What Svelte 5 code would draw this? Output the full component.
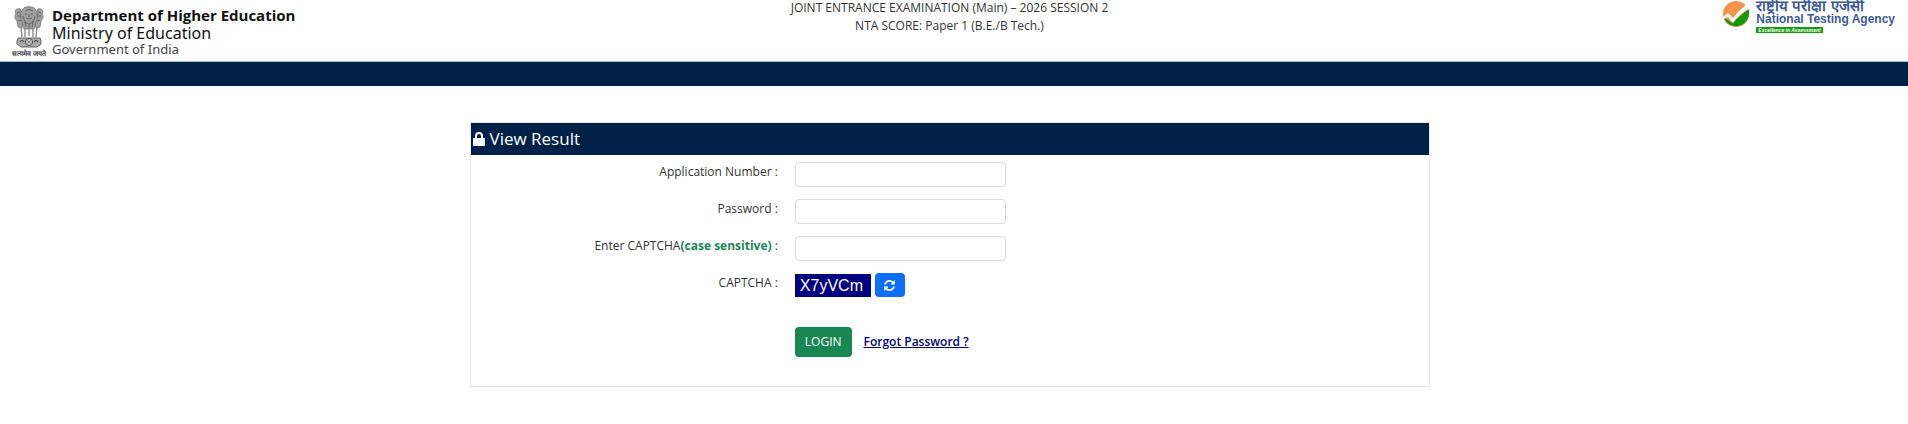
<script lang="ts">
  const motto = 'सत्यमेव जयते';
  const captchaChars = 'ABCDEFGHJKLMNPQRSTUVWXYZabcdefghjkmnpqrstuvwxyz23456789';

  let applicationNumber = $state('');
  let password = $state('');
  let captchaInput = $state('');
  let captcha = $state('X7yVCm');

  const refreshCaptcha = () => {
    captcha = Array.from({ length: 6 }, () => captchaChars[Math.floor(Math.random() * captchaChars.length)]).join('');
    captchaInput = '';
  };

  const login = (event: SubmitEvent) => {
    event.preventDefault();
    if (captchaInput !== captcha) {
      refreshCaptcha();
    }
  };
</script>

<header class="header">
  <div class="ministry">
    <svg class="emblem" viewBox="0 0 34 52" role="img" aria-label="Emblem of India">
      <!-- lions -->
      <g fill="#a0a0a0" stroke="#666" stroke-width="0.7">
        <path d="M8 3 C4 2 2 5 4 8 C2 10 3 13 5 15 L6 21 L10 22 L12 10 Z" />
        <path d="M26 3 C30 2 32 5 30 8 C32 10 31 13 29 15 L28 21 L24 22 L22 10 Z" />
        <path d="M11 3 C12 0 22 0 23 3 C26 6 26 12 24 16 L22 23 H12 L10 16 C8 12 8 6 11 3 Z" />
      </g>
      <g fill="none" stroke="#555" stroke-width="0.8">
        <path d="M13 5 Q17 2 21 5 M13 8 L15 8 M19 8 L21 8 M17 8 V11 M14 12 Q17 14 20 12 M11 10 Q12 17 17 18 Q22 17 23 10 M13 15 L14 21 M21 15 L20 21 M17 18 V22" />
        <path d="M5 7 L8 6 M5 10 L9 10 M6 14 L9 15 M29 7 L26 6 M29 10 L25 10 M28 14 L25 15" />
      </g>
      <g fill="none" stroke="#888" stroke-width="1.4">
        <path d="M9 21 L10 31 M13 22 L13 31 M21 22 L21 31 M25 21 L24 31 M17 22 V30" />
      </g>
      <!-- abacus with the wheel -->
      <path d="M6 32 H28 L29 35 V38 L25 41 H9 L5 38 V35 Z" fill="#aaa" stroke="#666" />
      <circle cx="17" cy="36" r="3.5" fill="#eee" stroke="#444" />
      <path d="M17 33 V39 M14 36 H20 M15 34 L19 38 M19 34 L15 38" stroke="#555" stroke-width="0.5" />
      <path d="M8 36 Q10 33 12 36 M22 36 Q24 33 26 36" fill="none" stroke="#444" stroke-width="1.2" />
      <text x="17" y="50" text-anchor="middle" font-size="7" font-weight="700" fill="#444">{motto}</text>
    </svg>
    <div class="ministry-name">
      <strong>Department of Higher Education</strong>
      <span>Ministry of Education</span>
      <small>Government of India</small>
    </div>
  </div>

  <div class="exam">
    <div>JOINT ENTRANCE EXAMINATION (Main) – 2026 SESSION 2</div>
    <div>NTA SCORE: Paper 1 (B.E./B Tech.)</div>
  </div>

  <div class="agency">
    <svg class="agency-mark" viewBox="0 0 26 26" aria-hidden="true">
      <circle cx="13" cy="13" r="13" fill="#f7924a" />
      <path d="M0.500 16 L9 22 L25.500 8 A13 13 0 0 1 0.500 16 Z" fill="#129b0e" />
      <path d="M0 16 L5 12 L10 17 Q16 9 23 4 L25.500 8 Q16 13 10 22 L5 16 L0.500 18 Z" fill="#fff" />
    </svg>
    <div class="agency-name">
      <span class="agency-hindi">राष्ट्रीय परीक्षा एजेंसी</span>
      <strong>National Testing Agency</strong>
      <em>Excellence in Assessment</em>
    </div>
  </div>
</header>

<div class="bar"></div>

<main>
  <section class="panel">
    <h1>
      <svg class="lock" viewBox="0 0 12 14" aria-hidden="true">
        <path d="M1 6 H11 Q12 6 12 7 V13 Q12 14 11 14 H1 Q0 14 0 13 V7 Q0 6 1 6 Z" fill="#fff" />
        <path d="M3 7 V4 A3 3 0 0 1 9 4 V7" fill="none" stroke="#fff" stroke-width="2" />
      </svg>
      View Result
    </h1>

    <form onsubmit={login}>
      <div class="row">
        <label for="application-number">Application Number :</label>
        <div class="control">
          <input id="application-number" type="text" bind:value={applicationNumber} />
        </div>
      </div>
      <div class="row">
        <label for="password">Password :</label>
        <div class="control">
          <input id="password" type="password" bind:value={password} />
        </div>
      </div>
      <div class="row">
        <label for="captcha-input">Enter CAPTCHA<b>(case sensitive)</b> :</label>
        <div class="control">
          <input id="captcha-input" type="text" autocomplete="off" bind:value={captchaInput} />
        </div>
      </div>
      <div class="row">
        <span class="label">CAPTCHA :</span>
        <div class="control">
          <span class="captcha">{captcha}</span>
          <button class="refresh" type="button" aria-label="Refresh CAPTCHA" onclick={refreshCaptcha}>
            <svg viewBox="0 0 1536 1536" aria-hidden="true">
              <path
                fill="#fff"
                d="M1511 928q0 5-1 7-64 268-268 434.500T764 1536q-146 0-282.500-55T238 1324l-129 129q-19 19-45 19t-45-19-19-45V960q0-26 19-45t45-19h448q26 0 45 19t19 45-19 45l-137 137q71 66 161 102t187 36q134 0 250-65t186-179q11-17 53-117 8-23 30-23h192q13 0 22.500 9.500t9.500 22.500zm25-800v448q0 26-19 45t-45 19h-448q-26 0-45-19t-19-45 19-45l138-138Q969 256 768 256q-134 0-250 65T332 500q-11 17-53 117-8 23-30 23H50q-13 0-22.500-9.500T18 608v-7q65-268 270-434.500T768 0q146 0 284 55.500T1297 212l130-129q19-19 45-19t45 19 19 45z"
              />
            </svg>
          </button>
        </div>
      </div>
      <div class="row actions">
        <div class="control">
          <button class="login" type="submit">LOGIN</button>
          <a href="#forgot-password">Forgot Password ?</a>
        </div>
      </div>
    </form>
  </section>
</main>

<style>
  :global(body) {
    background: #fff;
    color: #333;
    font: 12px/18px "Open Sans", sans-serif;
  }

  .header {
    display: grid;
    grid-template-columns: 1fr auto 1fr;
    height: 61px;
    padding: 0 9px 0 0;
    border-bottom: 1px solid #a9bcc8;
  }

  .ministry {
    display: flex;
    align-items: flex-start;
    gap: 6px;
    padding: 6px 0 0 12px;
  }

  .emblem {
    width: 34px;
    height: 52px;
  }

  .ministry-name {
    display: flex;
    flex-direction: column;
    font-family: "Noto Sans", sans-serif;
    color: #111;
  }

  .ministry-name strong {
    font-family: "Open Sans", sans-serif;
    font-size: 15px;
    line-height: 19px;
  }

  .ministry-name span {
    font-size: 16px;
    line-height: 17px;
  }

  .ministry-name small {
    font-size: 13px;
    line-height: 15px;
    color: #444;
  }

  .exam {
    margin-top: -1px;
    text-align: center;
  }

  .agency {
    display: flex;
    justify-content: flex-end;
    align-items: flex-start;
    gap: 7px;
    padding-right: 4px;
  }

  .agency-mark {
    width: 26px;
    height: 26px;
    margin-top: 1px;
  }

  .agency-name {
    display: flex;
    flex-direction: column;
    align-items: flex-start;
    font-family: "Liberation Sans", sans-serif;
    color: #3d5a98;
  }

  .agency-hindi {
    font-size: 15px;
    font-weight: 700;
    line-height: 12px;
  }

  .agency-name strong {
    font-size: 12px;
    line-height: 15px;
  }

  .agency-name em {
    padding: 0 2px;
    background: #129b0e;
    color: #fff;
    font-size: 5px;
    font-weight: 700;
    line-height: 6px;
  }

  .bar {
    height: 24px;
    background: #002147;
  }

  main {
    padding: 36px 9px 36px 0;
  }

  .panel {
    box-sizing: border-box;
    max-width: 960px;
    margin: 0 auto;
    border: 1px solid #e4e6ea;
  }

  h1 {
    display: flex;
    align-items: center;
    gap: 5px;
    margin: 0;
    padding: 0 2px;
    background: #002147;
    color: #fff;
    font-size: 17px;
    font-weight: 400;
    line-height: 32px;
  }

  .lock {
    width: 12px;
    height: 14px;
  }

  form {
    padding: 7px 0 29px;
  }

  .row {
    display: grid;
    grid-template-columns: 1fr 2fr;
    margin-bottom: 12px;
  }

  label,
  .label {
    padding-right: 12px;
    line-height: 20px;
    text-align: right;
  }

  label b {
    color: #198754;
  }

  .control {
    display: flex;
    align-items: center;
    gap: 4px;
    padding-left: 5px;
  }

  input {
    box-sizing: border-box;
    width: 211px;
    height: 25px;
    padding: 2px 8px;
    border: 1px solid #d5dae0;
    border-radius: 4px;
    font: inherit;
  }

  .captcha {
    padding: 0 8px 0 5px;
    background: #000080;
    color: #fff;
    font: 16px/23px "Liberation Sans", sans-serif;
  }

  button {
    border: 0;
    border-radius: 4px;
    color: #fff;
    font: inherit;
    cursor: pointer;
  }

  .refresh {
    display: flex;
    align-items: center;
    justify-content: center;
    width: 30px;
    height: 24px;
    padding: 0;
    background: #0d6efd;
  }

  .refresh svg {
    width: 11px;
    height: 11px;
  }

  .actions {
    margin: 30px 0 0;
  }

  .actions .control {
    grid-column: 2;
    gap: 12px;
  }

  .login {
    padding: 0 10px;
    background: #198754;
    line-height: 30px;
  }

  a {
    color: #000080;
    font-weight: 600;
  }
</style>
